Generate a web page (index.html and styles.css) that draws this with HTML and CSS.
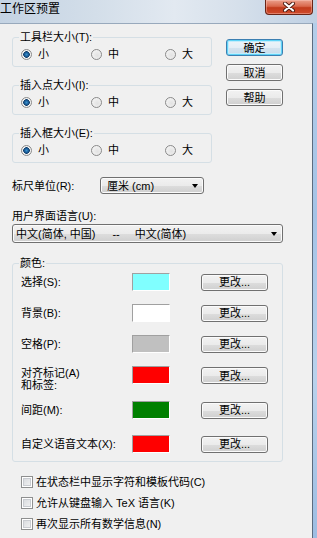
FILE: index.html
```html
<!DOCTYPE html>
<html lang="zh-CN">
<head>
  <meta charset="UTF-8" />
  <meta name="viewport" content="width=device-width, initial-scale=1.0"/>
  <title>工作区预置</title>
  <link rel="stylesheet" href="styles.css">
</head>
<body>
  <div class="titlebar">
    <span class="title">工作区预置</span>
    <button class="close" aria-label="关闭">
      <svg width="14" height="10" viewBox="0 0 14 10">
        <path d="M3 1.5 L11 8.5 M11 1.5 L3 8.5" stroke="#4a1a10" stroke-width="4" stroke-linecap="round"/>
        <path d="M3 1.5 L11 8.5 M11 1.5 L3 8.5" stroke="#fff" stroke-width="2.2" stroke-linecap="round"/>
      </svg>
    </button>
  </div>

  <div class="client">
    <div class="top">
      <div class="groups">
        <fieldset class="group">
          <legend>工具栏大小(T):</legend>
          <div class="options">
            <label class="opt"><input type="radio" name="toolbar" checked>小</label>
            <label class="opt"><input type="radio" name="toolbar">中</label>
            <label class="opt"><input type="radio" name="toolbar">大</label>
          </div>
        </fieldset>
        <fieldset class="group">
          <legend>插入点大小(I):</legend>
          <div class="options">
            <label class="opt"><input type="radio" name="insert" checked>小</label>
            <label class="opt"><input type="radio" name="insert">中</label>
            <label class="opt"><input type="radio" name="insert">大</label>
          </div>
        </fieldset>
        <fieldset class="group">
          <legend>插入框大小(E):</legend>
          <div class="options">
            <label class="opt"><input type="radio" name="box" checked>小</label>
            <label class="opt"><input type="radio" name="box">中</label>
            <label class="opt"><input type="radio" name="box">大</label>
          </div>
        </fieldset>
      </div>

      <div class="actions">
        <button class="btn default">确定</button>
        <button class="btn">取消</button>
        <button class="btn">帮助</button>
      </div>
    </div>

    <div class="unit-row">
      <span class="caption">标尺单位(R):</span>
      <div class="combo unit"><span>厘米 (cm)</span><i class="arrow"></i></div>
    </div>

    <div class="lang-caption">用户界面语言(U):</div>
    <div class="combo lang">
      <span>中文(简体, 中国)<span class="sep">--</span>中文(简体)</span>
      <i class="arrow"></i>
    </div>

    <fieldset class="group colors">
      <legend>颜色:</legend>
      <div class="color-row">
        <span>选择(S):</span>
        <span class="swatch cyan"></span>
        <button class="btn change">更改...</button>
      </div>
      <div class="color-row">
        <span>背景(B):</span>
        <span class="swatch white"></span>
        <button class="btn change">更改...</button>
      </div>
      <div class="color-row">
        <span>空格(P):</span>
        <span class="swatch grey"></span>
        <button class="btn change">更改...</button>
      </div>
      <div class="color-row two-line">
        <span class="caption">对齐标记(A)<br>和标签:</span>
        <span class="swatch red"></span>
        <button class="btn change">更改...</button>
      </div>
      <div class="color-row after-two">
        <span>间距(M):</span>
        <span class="swatch green"></span>
        <button class="btn change">更改...</button>
      </div>
      <div class="color-row last">
        <span>自定义语音文本(X):</span>
        <span class="swatch red"></span>
        <button class="btn change">更改...</button>
      </div>
    </fieldset>

    <div class="checks">
      <label class="check"><input type="checkbox">在状态栏中显示字符和模板代码(C)</label>
      <label class="check"><input type="checkbox">允许从键盘输入 TeX 语言(K)</label>
      <label class="check"><input type="checkbox">再次显示所有数学信息(N)</label>
    </div>
  </div>
</body>
</html>
```

FILE: styles.css
```css
body {
  margin: 0;
  background: linear-gradient(#b6cfe9, #a4c3e6 40%, #b9d2ec 70%, #9dbde2);
  font-family: "Liberation Sans", "Noto Sans CJK SC", sans-serif;
  font-size: 11px;
  line-height: 12px;
  color: #000;
}
.titlebar {
  height: 23px;
  display: flex;
  justify-content: space-between;
  align-items: flex-start;
  background: linear-gradient(to right, #c4d3e3 0%, #d3dee9 30%, #e2e9f1 55%, #d6e0eb 75%, #bfd0e3 100%);
}
.title {
  font-size: 12px;
  line-height: 14px;
  padding-top: 2px;
}
.close {
  width: 48px;
  height: 15px;
  margin-right: 4px;
  padding: 0;
  display: flex;
  align-items: center;
  justify-content: center;
  border: 1px solid #6a2415;
  border-top: none;
  border-radius: 0 0 4px 4px;
  background: linear-gradient(#eba08c 0%, #d9684c 45%, #c23b1c 55%, #cf4b2c 100%);
  box-shadow: inset 0 0 0 1px rgba(255,210,200,0.4);
}
.client {
  width: 313px;
  min-height: 515px;
  box-sizing: border-box;
  background: #f0f0f0;
  border-top: 1px solid #98a9bc;
  border-right: 1px solid #5c6c7f;
  padding: 0 29px 0 12px;
}
.top {
  display: flex;
  gap: 14px;
  padding-top: 7px;
}
.groups {
  width: 217px;
  display: flex;
  flex-direction: column;
  gap: 12px;
}
.group {
  margin: 0;
  min-width: 0;
  padding: 5px 8px 6px;
  border: 1px solid #d5dfe5;
  border-radius: 3px;
}
.group legend {
  padding: 0 1px;
  margin-left: -2px;
}
.options {
  display: grid;
  grid-template-columns: 70px 74px auto;
}
.opt {
  display: flex;
  align-items: center;
  gap: 6px;
  height: 12px;
}
.opt input {
  appearance: none;
  width: 11px;
  height: 11px;
  margin: 0;
  box-sizing: border-box;
  border: 1px solid #8a8a8a;
  border-radius: 50%;
  background: radial-gradient(circle at 60% 60%, #e2e2e2, #f8f8f8);
}
.opt input:checked {
  background: radial-gradient(circle, #3a94d0 0, #1c5d98 2px, #123f6b 3px, #f6f6f6 3.6px, #dcdcdc 100%);
}
.actions {
  display: flex;
  flex-direction: column;
  gap: 8px;
  margin-top: 8px;
}
.btn {
  width: 57px;
  height: 17px;
  padding: 0;
  font: inherit;
  color: #000;
  border: 1px solid #707070;
  border-radius: 3px;
  background: linear-gradient(#f2f2f2 0%, #ebebeb 50%, #dddddd 51%, #cfcfcf 100%);
  box-shadow: inset 0 0 0 1px #fbfbfb;
}
.btn.default {
  border-color: #3c7fb1;
  background: linear-gradient(#eef5fa 0%, #e4eef6 50%, #d4e3ef 51%, #c9dbea 100%);
  box-shadow: inset 0 0 0 1px #5fd3f7, inset 0 0 0 2px #c3ecfb;
}
.unit-row {
  display: flex;
  align-items: center;
  margin-top: 14px;
}
.unit-row .caption {
  width: 88px;
}
.combo {
  display: flex;
  align-items: center;
  justify-content: space-between;
  box-sizing: border-box;
  border: 1px solid #707070;
  border-radius: 3px;
  background: linear-gradient(#f2f2f2 0%, #ebebeb 50%, #dddddd 51%, #cfcfcf 100%);
  box-shadow: inset 0 0 0 1px #fbfbfb;
  padding: 0 5px 0 6px;
}
.combo.unit {
  width: 104px;
  height: 17px;
}
.combo.lang {
  height: 19px;
  margin-top: 2px;
  padding-left: 3px;
}
.sep {
  margin: 0 15px 0 17px;
}
.arrow {
  width: 0;
  height: 0;
  border-left: 3.5px solid transparent;
  border-right: 3.5px solid transparent;
  border-top: 4px solid #000;
}
.lang-caption {
  margin-top: 16px;
}
.colors {
  margin-top: 14px;
  padding: 4px 8px 8px;
}
.color-row {
  display: grid;
  grid-template-columns: 111px 38px auto;
  align-items: center;
  margin-top: 13px;
}
.colors legend + .color-row {
  margin-top: 0;
}
.color-row.two-line {
  align-items: start;
}
.color-row.two-line .caption,
.color-row.two-line .change {
  margin-top: 1px;
}
.color-row.after-two {
  margin-top: 10px;
}
.color-row.last {
  margin-top: 16px;
}
.swatch {
  height: 18px;
  box-sizing: border-box;
  border: 1px solid;
  border-color: #a0a0a0 #fff #fff #a0a0a0;
}
.cyan { background: #80ffff; }
.white { background: #fff; }
.grey { background: #c0c0c0; }
.red { background: #ff0000; }
.green { background: #008000; }
.change {
  width: 67px;
  margin-left: 31px;
}
.checks {
  margin-top: 14px;
  padding-left: 9px;
  display: flex;
  flex-direction: column;
  gap: 9px;
}
.check {
  display: flex;
  align-items: center;
  gap: 3px;
  height: 12px;
}
.check input {
  appearance: none;
  width: 12px;
  height: 12px;
  margin: 0;
  box-sizing: border-box;
  border: 1px solid #8e8f8f;
  background: linear-gradient(135deg, #d3d6da, #f6f6f6);
  box-shadow: inset 0 0 0 1px #fff, inset 0 0 0 2px #c9ccd1;
}
```
